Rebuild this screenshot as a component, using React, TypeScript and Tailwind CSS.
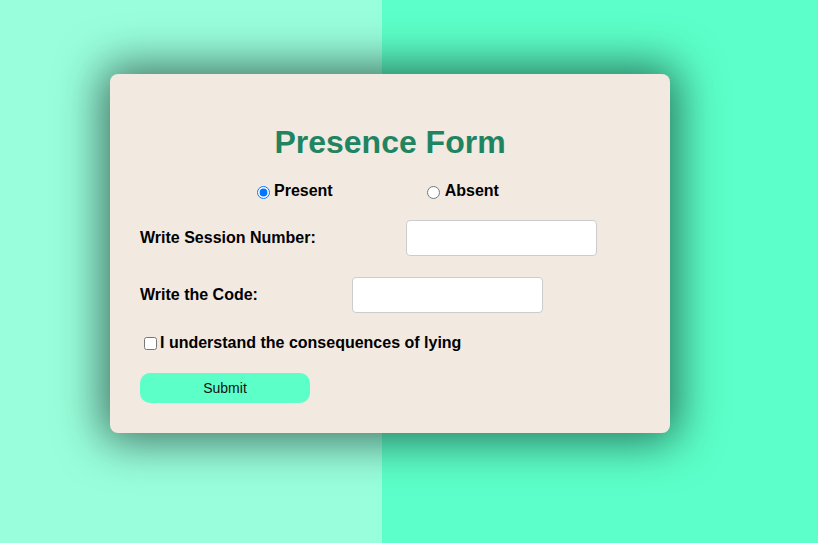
import React from "react";

const PresenceForm = () => {
  return (
    <div className="min-h-[543px] w-full bg-[linear-gradient(to_right,#98fedb_382px,#5cffc9_382px)] pt-[74px] font-['Liberation_Sans',Arial,sans-serif]">
      <div className="ml-[110px] w-[560px] rounded-lg bg-[#f2e9e1] p-[30px] shadow-[0_0_45px_8px_rgba(0,0,0,0.55)]">
        {/* Title */}
        <h1 className="mb-[21px] mt-[20px] text-center text-[32px] font-bold leading-[37px] text-[#1f8462]">
          Presence Form
        </h1>

        <div className="flex flex-col gap-[21px]">
          {/* Radios */}
          <div className="-mb-[1px] flex items-center pl-[112px] text-[16px] font-bold leading-[18px] text-black">
            <label className="flex items-center">
              <input type="radio" name="status" defaultChecked className="ml-[5px] mr-[4px] mt-[3px] h-[13px] w-[13px]" />
              <span>Present</span>
            </label>
            <label className="ml-[94px] flex items-center">
              <input type="radio" name="status" className="mr-[5px] mt-[3px] h-[13px] w-[13px]" />
              <span>Absent</span>
            </label>
          </div>

          {/* Session number */}
          <div className="flex items-center text-[16px] font-bold text-black">
            <label>Write Session Number:</label>
            <input type="text" className="ml-[90px] h-[36px] w-[191px] rounded border border-[#ccc] bg-white px-2" />
          </div>

          {/* Code */}
          <div className="flex items-center text-[16px] font-bold text-black">
            <label>Write the Code:</label>
            <input type="text" className="ml-[94px] h-[36px] w-[191px] rounded border border-[#ccc] bg-white px-2" />
          </div>

          {/* Agreement */}
          <label className="flex items-center text-[16px] font-bold leading-[18px] text-black">
            <input type="checkbox" className="ml-[4px] mr-[3px] h-[13px] w-[13px]" />
            I understand the consequences of lying
          </label>

          <button className="h-[30px] w-[170px] rounded-[10px] bg-[#5cffc8] text-[14px] text-[#111]">
            Submit
          </button>
        </div>
      </div>
    </div>
  );
};

export default function App() {
  return <PresenceForm />;
}
